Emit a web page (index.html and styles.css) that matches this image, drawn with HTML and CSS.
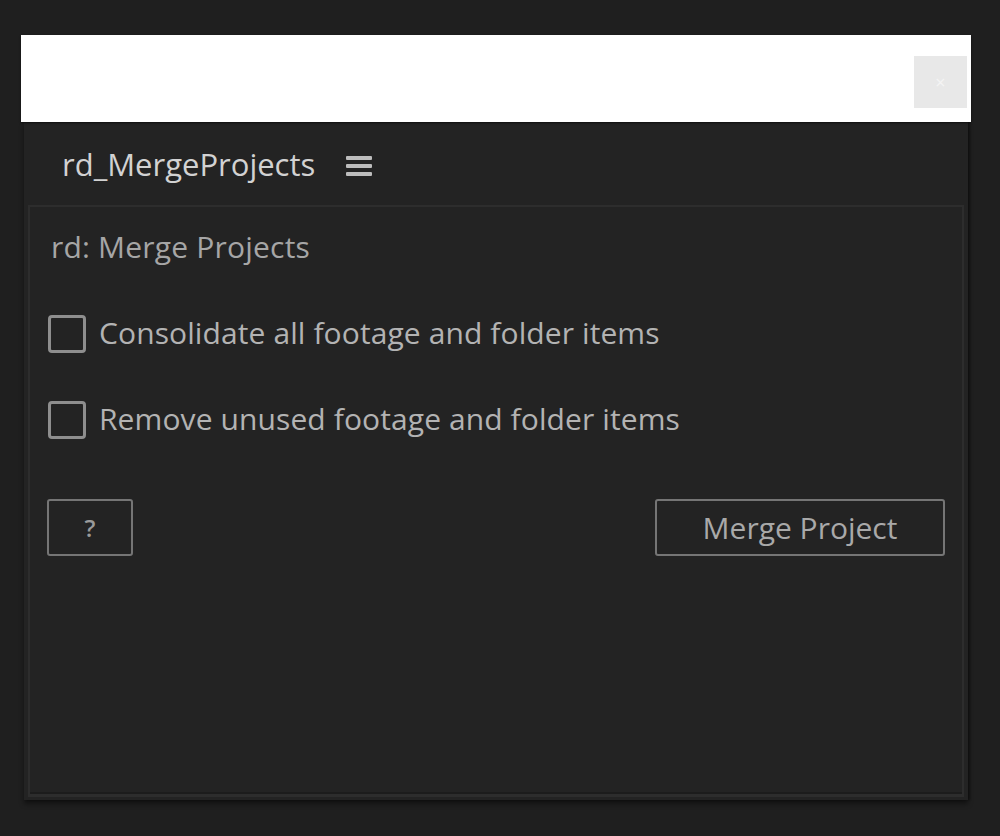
FILE: index.html
```html
<!DOCTYPE html>
<html lang="en">
<head>
<meta charset="utf-8">
<title>rd_MergeProjects</title>
<link rel="stylesheet" href="styles.css">
</head>
<body>
<div class="window">
  <div class="titlebar">
    <div class="close">×</div>
  </div>
  <div class="panel">
    <div class="tab">
      <span class="tab-name">rd_MergeProjects</span>
      <svg class="menu" width="26" height="22" viewBox="0 0 26 22">
        <rect x="0" y="1" width="26" height="4" rx="1" fill="#bdbdbd"/>
        <rect x="0" y="9" width="26" height="4" rx="1" fill="#bdbdbd"/>
        <rect x="0" y="17" width="26" height="4" rx="1" fill="#bdbdbd"/>
      </svg>
    </div>
    <div class="content">
      <div class="heading">rd: Merge Projects</div>
      <label class="check-row"><span class="checkbox"></span><span class="check-label">Consolidate all footage and folder items</span></label>
      <label class="check-row"><span class="checkbox"></span><span class="check-label">Remove unused footage and folder items</span></label>
      <div class="buttons">
        <div class="btn btn-help">?</div>
        <div class="btn btn-merge">Merge Project</div>
      </div>
    </div>
  </div>
</div>
</body>
</html>
```

FILE: styles.css
```css
html, body {
  margin: 0;
  padding: 0;
  background: #1f1f1f;
}
body {
  font-family: "Open Sans", "Noto Sans", sans-serif;
  width: 1000px;
  height: 836px;
  overflow: hidden;
}
.window {
  margin: 35px 0 0 21px;
  width: 950px;
}
.titlebar {
  height: 87px;
  background: #ffffff;
  display: flex;
  justify-content: flex-end;
  align-items: flex-start;
  padding: 21px 4px 0 0;
  box-sizing: border-box;
  box-shadow: 0 1px 2px rgba(0,0,0,0.6);
  position: relative;
  z-index: 1;
}
.close {
  width: 53px;
  height: 52px;
  background: #e8e8e8;
  color: #f4f4f4;
  font-size: 18px;
  line-height: 52px;
  text-align: center;
}
.panel {
  margin: 0 3px;
  height: 678px;
  background: #232323;
  display: flex;
  flex-direction: column;
  box-shadow: 0 4px 5px rgba(0,0,0,0.45), 2px 0 2px rgba(0,0,0,0.35);
}
.tab {
  height: 83px;
  padding: 22px 0 0 38px;
  box-sizing: border-box;
  display: flex;
  align-items: flex-start;
}
.tab-name {
  font-size: 31px;
  line-height: 40px;
  color: #d2d2d2;
}
.menu {
  margin: 11px 0 0 31px;
}
.content {
  flex: 1;
  margin: 0 4px 3px 4px;
  border: 2px solid #2d2d2d;
  border-bottom-width: 3px;
  box-shadow: inset 0 -9px 0 -7px #1c1c1c;
  padding: 20px 17px 0 18px;
  display: flex;
  flex-direction: column;
}
.heading {
  font-size: 30px;
  letter-spacing: 0.2px;
  line-height: 40px;
  color: #a6a6a6;
  margin-left: 3px;
}
.check-row {
  display: flex;
  align-items: center;
  height: 40px;
  margin-top: 46px;
}
.check-row + .check-row {
  margin-top: 46px;
}
.checkbox {
  width: 38px;
  height: 38px;
  box-sizing: border-box;
  border: 3px solid #8e8e8e;
  border-radius: 4px;
  margin-top: 2px;
  flex: none;
}
.check-label {
  margin-left: 13px;
  font-size: 30px;
  letter-spacing: 0.1px;
  line-height: 40px;
  color: #b3b3b3;
}
.buttons {
  display: flex;
  justify-content: space-between;
  margin-top: 60px;
}
.btn {
  height: 57px;
  box-sizing: border-box;
  border: 2px solid #757575;
  border-radius: 3px;
  display: flex;
  align-items: center;
  justify-content: center;
  color: #a9a9a9;
  font-size: 30px;
  line-height: 40px;
}
.btn-help {
  width: 86px;
  font-size: 24px;
  font-weight: 600;
  color: #9a9a9a;
  margin-left: -1px;
}
.btn-merge {
  width: 290px;
}
```
